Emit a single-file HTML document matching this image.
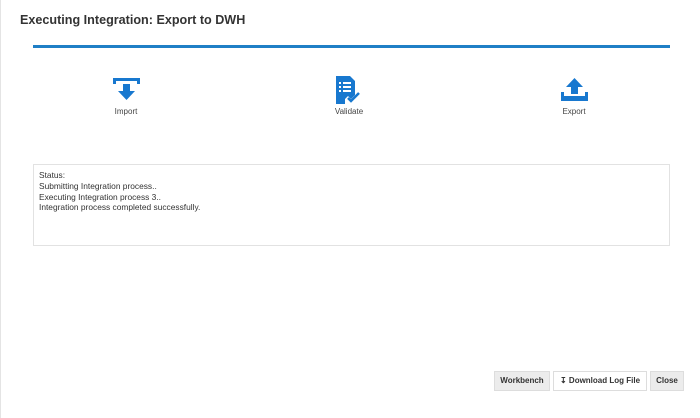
<!DOCTYPE html>
<html><head><style>
body{margin:0;width:700px;height:418px;background:#fff;font-family:"Liberation Sans",sans-serif;position:relative;overflow:hidden;border-left:1px solid #e4e4e4;box-sizing:border-box}
.t{position:absolute;left:19px;top:13px;font-size:12.6px;font-weight:bold;color:#333}
.line{position:absolute;left:32px;top:45px;width:637px;height:3px;background:#1f7fc6}
.lbl{position:absolute;top:107px;font-size:8px;color:#444;width:80px;text-align:center}
.box{position:absolute;left:32px;top:164px;width:637px;height:82px;border:1px solid #e2e2e2;box-sizing:border-box;padding:5px 0 0 5px;font-size:8.4px;line-height:10.8px;color:#333}
.btn{position:absolute;top:371px;height:20px;font-size:8px;font-weight:bold;color:#333;border:1px solid #ddd;box-sizing:border-box;text-align:center;line-height:18px;background:#ececec}
</style></head><body>
<div class="t">Executing Integration: Export to DWH</div>
<div class="line"></div>
<svg style="position:absolute;left:112px;top:78px" width="27" height="24" viewBox="0 0 27 24"><path d="M0 0h27v6h-3v-3h-21v3h-3z" fill="#1878cf"/><path d="M10 6h7v7h5l-8.5 9l-8.5-9h5z" fill="#1878cf"/></svg>
<div class="lbl" style="left:85px">Import</div>
<svg style="position:absolute;left:335px;top:76px" width="27" height="28" viewBox="0 0 27 28"><path d="M0 0h14l5 5v14l-4 4-3-3-3 3v5H0z" fill="#1878cf"/><g fill="#fff"><rect x="3" y="6" width="2" height="2"/><rect x="7" y="6" width="8" height="2"/><rect x="3" y="10" width="2" height="2"/><rect x="7" y="10" width="8" height="2"/><rect x="3" y="14" width="2" height="2"/><rect x="7" y="14" width="8" height="2"/></g><path d="M12 22l3 3 8-8" stroke="#1878cf" stroke-width="2.5" fill="none"/></svg>
<div class="lbl" style="left:308px">Validate</div>
<svg style="position:absolute;left:560px;top:78px" width="27" height="23" viewBox="0 0 27 23"><path d="M13.5 0l8.5 9h-5v7h-7v-7h-5z" fill="#1878cf"/><path d="M0 14h3v4h21v-4h3v9h-27z" fill="#1878cf"/></svg>
<div class="lbl" style="left:533px">Export</div>
<div class="box">Status:<br>Submitting Integration process..<br>Executing Integration process 3..<br>Integration process completed successfully.</div>
<div class="btn" style="left:493px;width:56px">Workbench</div>
<div class="btn" style="left:552px;width:94px;background:#fff">&#8615; Download Log File</div>
<div class="btn" style="left:649px;width:34px">Close</div>
</body></html>
